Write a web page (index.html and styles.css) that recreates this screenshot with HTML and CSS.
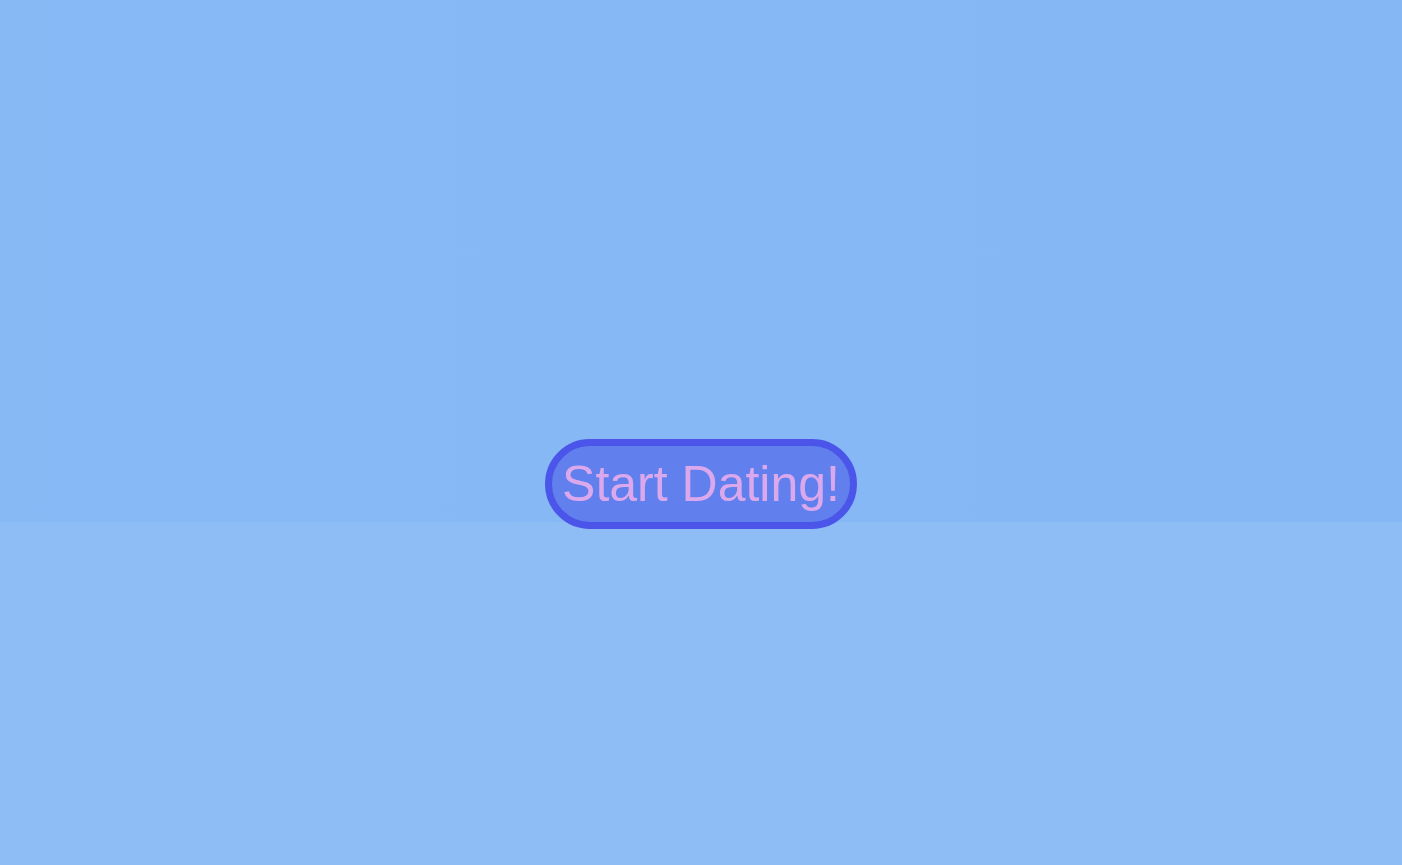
FILE: index.html
```html
<!DOCTYPE html>
<html lang="en">
<head>
<meta charset="utf-8">
<title>Start Dating</title>
<link rel="stylesheet" href="styles.css">
</head>
<body>
<main class="page">
  <section class="hero">
    <button class="start-btn" type="button">Start Dating!</button>
  </section>
  <section class="lower"></section>
</main>
</body>
</html>
```

FILE: styles.css
```css
html, body {
  margin: 0;
  padding: 0;
  height: 100%;
}

body {
  font-family: "Liberation Sans", Arial, sans-serif;
  background: #8ebdf5;
}

.page {
  display: flex;
  flex-direction: column;
  min-height: 100vh;
}

.hero {
  height: 522px;
  display: flex;
  justify-content: center;
  align-items: flex-end;
  background: linear-gradient(to right, #87b9f5, #84b7f4);
}

.lower {
  flex: 1;
  background: #8ebdf5;
}

.start-btn {
  position: relative;
  z-index: 1;
  margin-bottom: -7px;
  box-sizing: border-box;
  width: 312px;
  height: 90px;
  padding: 0 8px;
  border: 7px solid #4b55e9;
  border-radius: 45px;
  background: #6180ee;
  color: #dca8ec;
  font-family: "Liberation Sans", Arial, sans-serif;
  font-size: 50px;
  line-height: 1;
  cursor: pointer;
}
```
